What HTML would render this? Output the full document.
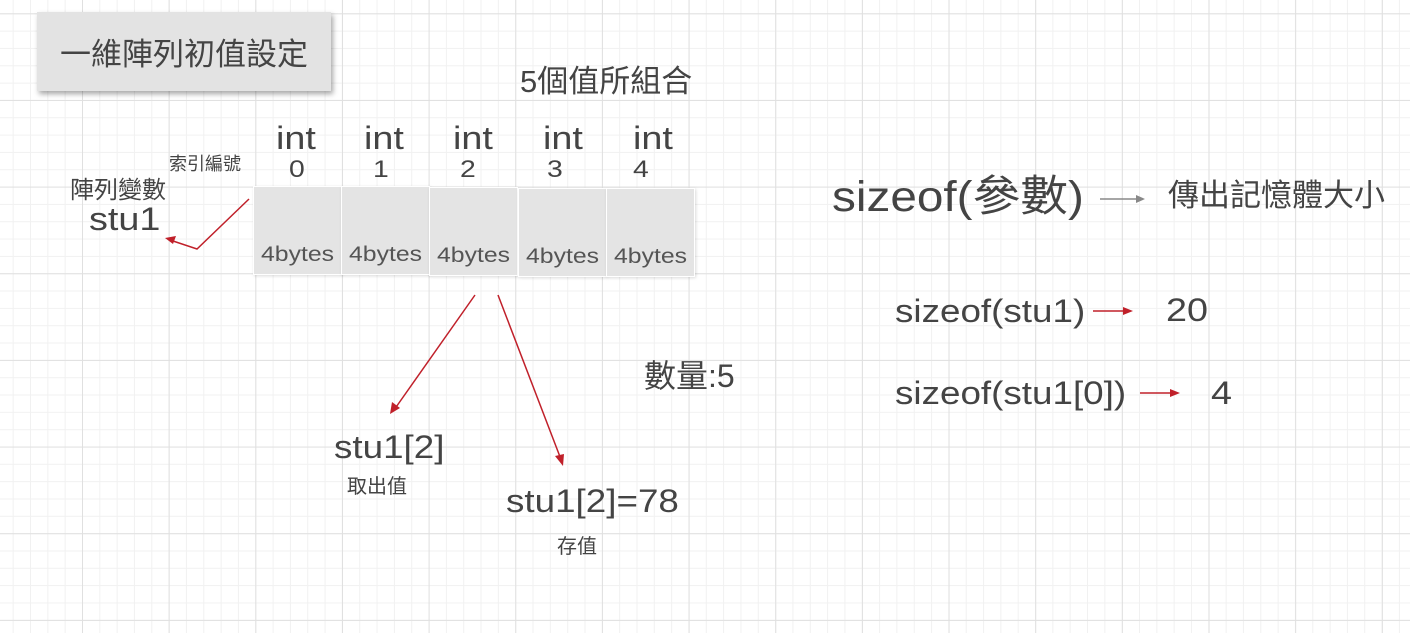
<!DOCTYPE html>
<html><head><meta charset="utf-8"><style>
body{margin:0;width:1410px;height:633px;overflow:hidden;position:relative;
background-color:#fff;
background-image:
linear-gradient(#e0e0e0 1px,transparent 1px),
linear-gradient(90deg,#e0e0e0 1px,transparent 1px),
linear-gradient(#f1f1f1 1px,transparent 1px),
linear-gradient(90deg,#f1f1f1 1px,transparent 1px);
background-size:86.67px 86.67px,86.67px 86.67px,17.33px 17.33px,17.33px 17.33px;
background-position:0 13.3px,-4.67px 0,0 13.3px,-4.67px 0;
font-family:"Liberation Sans","Noto Sans CJK TC",sans-serif;color:#444;}
.t{position:absolute;white-space:nowrap;line-height:1;}
.w{transform:scaleX(1.18);transform-origin:0 0;}
.v{transform:scaleX(1.15);transform-origin:0 0;}
.title{position:absolute;left:37px;top:12px;width:294px;height:79px;background:#e3e3e3;box-shadow:2px 3px 5px rgba(0,0,0,.35);
font-size:31px;display:flex;align-items:center;justify-content:center;color:#444;}
.box{position:absolute;top:186px;width:87px;height:87px;background:#e4e4e4;border:1px solid #fff;box-shadow:1px 1px 3px rgba(0,0,0,.15);}
.box span{position:absolute;bottom:7px;left:7px;font-size:21px;color:#555;transform:scaleX(1.18);transform-origin:0 0;}
</style></head><body>
<div class="title">一維陣列初值設定</div>
<div class="t" style="left:520px;top:66px;font-size:31px">5個值所組合</div>
<div class="t w" style="left:276px;top:122px;font-size:32px">int</div>
<div class="t w" style="left:364px;top:122px;font-size:32px">int</div>
<div class="t w" style="left:453px;top:122px;font-size:32px">int</div>
<div class="t w" style="left:543px;top:122px;font-size:32px">int</div>
<div class="t w" style="left:633px;top:122px;font-size:32px">int</div>
<div class="t w" style="left:289px;top:158px;font-size:24px">0</div>
<div class="t w" style="left:373px;top:158px;font-size:24px">1</div>
<div class="t w" style="left:460px;top:158px;font-size:24px">2</div>
<div class="t w" style="left:547px;top:158px;font-size:24px">3</div>
<div class="t w" style="left:633px;top:158px;font-size:24px">4</div>
<div class="t" style="left:169px;top:155px;font-size:18px">索引編號</div>
<div class="t" style="left:70px;top:179px;font-size:24px">陣列變數</div>
<div class="t w" style="left:89px;top:203px;font-size:32px">stu1</div>
<div class="box" style="left:253px"><span>4bytes</span></div>
<div class="box" style="left:341px"><span>4bytes</span></div>
<div class="box" style="left:429px;top:187px"><span>4bytes</span></div>
<div class="box" style="left:518px;top:188px"><span>4bytes</span></div>
<div class="box" style="left:606px;top:188px"><span>4bytes</span></div>
<div class="t" style="left:832px;top:176px;font-size:43px;transform:scaleX(1.11);transform-origin:0 0">sizeof(參數)</div>
<div class="t" style="left:1168px;top:180px;font-size:31px">傳出記憶體大小</div>
<div class="t v" style="left:895px;top:295px;font-size:32px">sizeof(stu1)</div>
<div class="t w" style="left:1166px;top:294px;font-size:32px">20</div>
<div class="t v" style="left:895px;top:377px;font-size:32px">sizeof(stu1[0])</div>
<div class="t w" style="left:1211px;top:377px;font-size:32px">4</div>
<div class="t" style="left:644px;top:360px;font-size:32px">數量:5</div>
<div class="t v" style="left:334px;top:431px;font-size:32px">stu1[2]</div>
<div class="t" style="left:347px;top:477px;font-size:20px">取出值</div>
<div class="t v" style="left:506px;top:485px;font-size:32px">stu1[2]=78</div>
<div class="t" style="left:557px;top:537px;font-size:20px">存值</div>
<svg width="1410" height="633" style="position:absolute;left:0;top:0">
<g stroke="#c0202a" stroke-width="1.5" fill="none">
<polyline points="249,199 197,249 170,240"/>
<line x1="475" y1="295" x2="394" y2="410"/>
<line x1="498" y1="295" x2="562" y2="462"/>
<line x1="1093" y1="311" x2="1125" y2="311"/>
<line x1="1140" y1="393" x2="1172" y2="393"/>
</g>
<g fill="#c0202a">
<polygon points="165,238 176,236 173,244"/>
<polygon points="390,414 392,402 400,408"/>
<polygon points="563,466 555,456 564,454"/>
<polygon points="1133,311 1123,307 1123,315"/>
<polygon points="1180,393 1170,389 1170,397"/>
</g>
<line x1="1100" y1="199" x2="1138" y2="199" stroke="#888" stroke-width="1.5"/>
<polygon points="1145,199 1136,195 1136,203" fill="#888"/>
</svg>
</body></html>
